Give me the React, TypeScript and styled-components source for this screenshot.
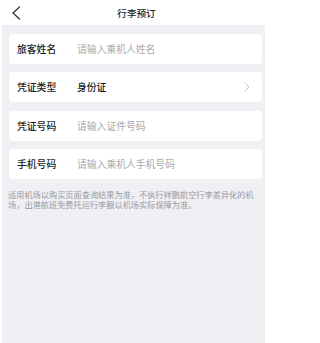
import React from "react";
import styled, { createGlobalStyle } from "styled-components";

const GlobalStyle = createGlobalStyle`
  html, body {
    margin: 0;
    padding: 0;
    background: #fff;
  }
  * {
    box-sizing: border-box;
  }
`;

const Page = styled.div`
  display: flex;
  flex-direction: column;
  width: 265px;
  height: 343px;
  padding-left: 2px;
  background: #fff;
  font-family: "Noto Sans CJK SC", "Noto Sans", sans-serif;
`;

const Header = styled.header`
  display: grid;
  grid-template-columns: 40px 1fr 34px;
  align-items: center;
  height: 25px;
  background: #fff;
`;

const BackButton = styled.button`
  display: flex;
  align-items: center;
  width: 100%;
  height: 25px;
  padding: 0 0 0 9px;
  border: none;
  background: none;
  cursor: pointer;
`;

const Title = styled.h1`
  margin: 0;
  text-align: center;
  font-size: 9.6px;
  font-weight: 500;
  color: #222;
`;

const Content = styled.main`
  flex: 1;
  display: flex;
  flex-direction: column;
  gap: 8.3px;
  padding: 9px 3px 0 7px;
  background: #efeff4;
`;

const Card = styled.div`
  display: flex;
  align-items: center;
  height: 30px;
  padding: 0 12px 0 8px;
  border-radius: 4px;
  background: #fff;
`;

const Label = styled.span`
  width: 60px;
  flex-shrink: 0;
  font-size: 9.8px;
  font-weight: 500;
  color: #1c1c1e;
`;

const Value = styled.span<{ $placeholder?: boolean }>`
  flex: 1;
  font-size: 9.8px;
  font-weight: ${({ $placeholder }) => ($placeholder ? 400 : 500)};
  color: ${({ $placeholder }) => ($placeholder ? "#a9a9ae" : "#1c1c1e")};
`;

const Note = styled.p`
  margin: 2px 0 0 -1px;
  padding-right: 4px;
  font-size: 8.2px;
  line-height: 10px;
  color: #9a9aa0;
`;

const fields = [
  { label: "旅客姓名", value: "请输入乘机人姓名", placeholder: true },
  { label: "凭证类型", value: "身份证", placeholder: false, arrow: true },
  { label: "凭证号码", value: "请输入证件号码", placeholder: true },
  { label: "手机号码", value: "请输入乘机人手机号码", placeholder: true },
];

const App = () => {
  return (
    <Page>
      <GlobalStyle />
      <Header>
        <BackButton aria-label="返回">
          <svg width="10" height="14" viewBox="0 0 10 14">
            <polyline
              points="8.5,1 2,7 8.5,13"
              fill="none"
              stroke="#333"
              strokeWidth="1.3"
              strokeLinecap="round"
              strokeLinejoin="round"
            />
          </svg>
        </BackButton>
        <Title>行李预订</Title>
        <span />
      </Header>
      <Content>
        {fields.map((f) => (
          <Card key={f.label}>
            <Label>{f.label}</Label>
            <Value $placeholder={f.placeholder}>{f.value}</Value>
            {f.arrow && (
              <svg width="6" height="10" viewBox="0 0 6 10">
                <polyline
                  points="1,1 5,5 1,9"
                  fill="none"
                  stroke="#c7c7cc"
                  strokeWidth="1"
                  strokeLinecap="round"
                  strokeLinejoin="round"
                />
              </svg>
            )}
          </Card>
        ))}
        <Note>
          适用机场以购买页面查询结果为准，不执行祥鹏航空行李差异化的机场，出港航班免费托运行李额以机场实际保障为准。
        </Note>
      </Content>
    </Page>
  );
};

export default App;
